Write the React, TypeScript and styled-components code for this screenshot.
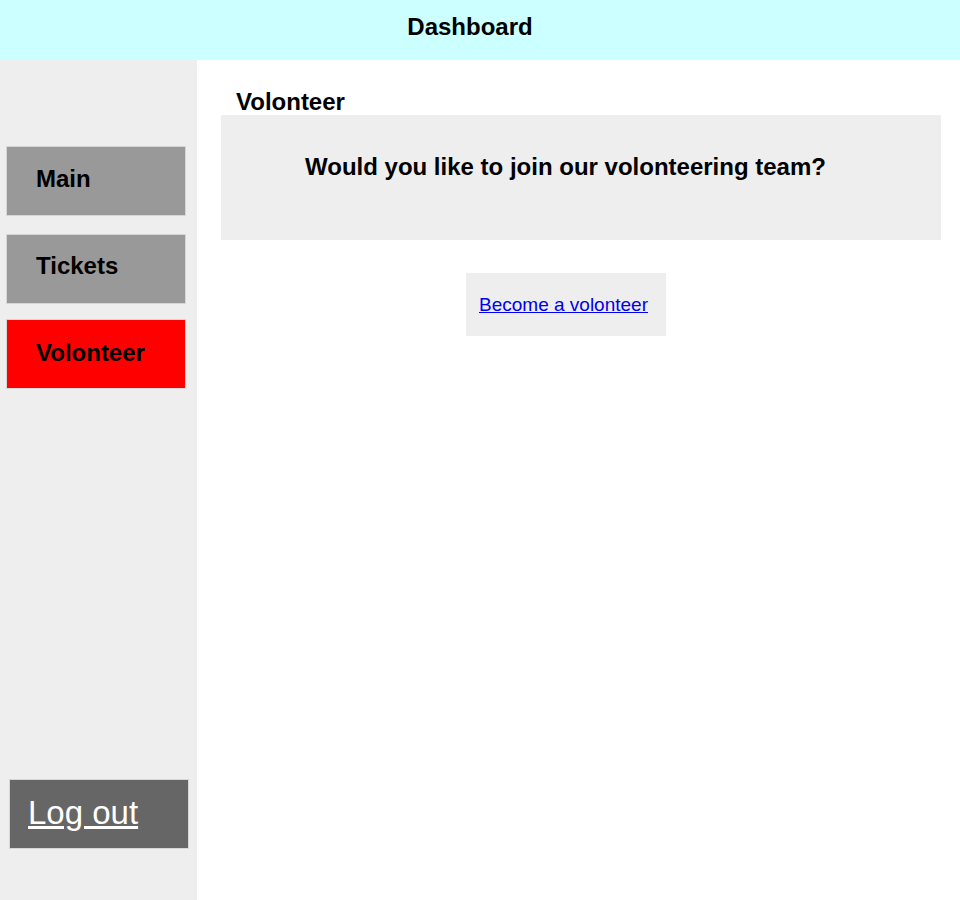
import React from "react";
import styled, { createGlobalStyle } from "styled-components";

const GlobalStyle = createGlobalStyle`
    * {
        box-sizing: border-box;
    }
    body {
        margin: 0;
        font-family: "Liberation Sans", Arial, sans-serif;
        background: #fff;
    }
`
const Page = styled.div`
    display: flex;
    flex-direction: column;
    width: 960px;
    height: 900px;
`
const Header = styled.header`
    display: flex;
    align-items: center;
    justify-content: center;
    height: 60px;
    flex-shrink: 0;
    padding: 0 20px 6px 0;
    background: #ccffff;
    font-size: 24px;
    font-weight: 700;
    color: #000;
`
const Body = styled.div`
    display: flex;
    flex: 1;
`
const Sidebar = styled.nav`
    display: flex;
    flex-direction: column;
    width: 197px;
    flex-shrink: 0;
    padding: 86px 0 51px 6px;
    background: #eeeeee;
`
const NavItem = styled.div<{ $active?: boolean; $gap: number; $shift: number }>`
    display: flex;
    align-items: center;
    width: 180px;
    height: 70px;
    margin-bottom: ${p => p.$gap}px;
    padding: 0 0 ${p => p.$shift}px 29px;
    border: 1px solid #d6d6d6;
    background: ${p => (p.$active ? "#ff0000" : "#999999")};
    font-size: 24px;
    font-weight: 700;
    color: #000;
`
const LogoutButton = styled.div`
    display: flex;
    align-items: center;
    width: 180px;
    height: 70px;
    margin: auto 0 0 3px;
    padding: 0 0 2px 18px;
    border: 1px solid #d6d6d6;
    background: #666666;
`
const LogoutLink = styled.a`
    color: #fff;
    font-size: 33px;
    text-decoration: underline;
`
const Main = styled.main`
    display: flex;
    flex-direction: column;
    flex: 1;
    padding: 28px 19px 0 24px;
`
const Title = styled.h2`
    margin: 0 0 0 15px;
    font-size: 24px;
    font-weight: 700;
    line-height: 27px;
    color: #000;
`
const Card = styled.section`
    height: 125px;
    padding: 37px 0 0 84px;
    background: #eeeeee;
`
const Question = styled.p`
    margin: 0;
    font-size: 24px;
    font-weight: 700;
    line-height: 30px;
    color: #000;
`
const LinkBox = styled.div`
    display: flex;
    align-items: center;
    align-self: flex-start;
    width: 200px;
    height: 63px;
    margin: 33px 0 0 245px;
    padding: 0 0 0 13px;
    background: #eeeeee;
`
const VolunteerLink = styled.a`
    color: #0000ee;
    font-size: 19px;
    text-decoration: underline;
`

const navItems = [
    { label: "Main", gap: 18, shift: 4 },
    { label: "Tickets", gap: 15, shift: 6 },
    { label: "Volonteer", gap: 0, shift: 2, active: true },
]

const App = () => {
    return (
        <>
            <GlobalStyle />
            <Page>
                <Header>Dashboard</Header>
                <Body>
                    <Sidebar>
                        {navItems.map(item => (
                            <NavItem
                                key={item.label}
                                $active={item.active}
                                $gap={item.gap}
                                $shift={item.shift}
                            >
                                {item.label}
                            </NavItem>
                        ))}
                        <LogoutButton>
                            <LogoutLink href="#">Log out</LogoutLink>
                        </LogoutButton>
                    </Sidebar>
                    <Main>
                        <Title>Volonteer</Title>
                        <Card>
                            <Question>Would you like to join our volonteering team?</Question>
                        </Card>
                        <LinkBox>
                            <VolunteerLink href="#">Become a volonteer</VolunteerLink>
                        </LinkBox>
                    </Main>
                </Body>
            </Page>
        </>
    )
}

export default App;
